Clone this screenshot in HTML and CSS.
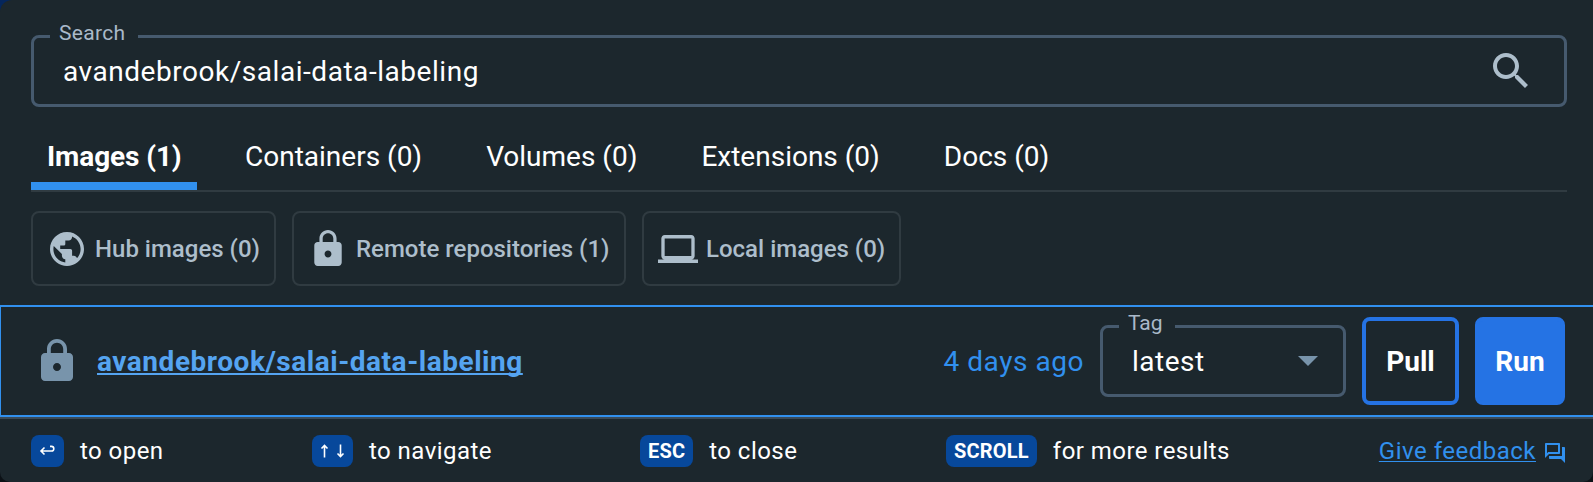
FILE: index.html
```
<!DOCTYPE html>
<html lang="en">
<head>
<meta charset="utf-8">
<title>Search</title>
<link rel="stylesheet" href="styles.css">
</head>
<body>
<main class="dialog">
  <div class="field search">
    <span class="field-label">Search</span>
    <span class="search-text">avandebrook/salai-data-labeling</span>
    <svg class="search-icon" viewBox="3 3 17.5 17.5"><path d="M15.5 14h-.79l-.28-.27C15.41 12.59 16 11.11 16 9.5 16 5.91 13.09 3 9.5 3S3 5.91 3 9.5 5.91 16 9.5 16c1.61 0 3.09-.59 4.23-1.57l.27.28v.79l5 4.99L20.49 19l-4.99-5zm-6 0C7.01 14 5 11.99 5 9.5S7.01 5 9.5 5 14 7.01 14 9.5 11.99 14 9.5 14z"/></svg>
  </div>
  <nav class="tabs">
    <a class="tab active">Images (1)</a>
    <a class="tab">Containers (0)</a>
    <a class="tab">Volumes (0)</a>
    <a class="tab">Extensions (0)</a>
    <a class="tab">Docs (0)</a>
  </nav>
  <div class="chips">
    <button class="chip hub"><svg class="globe" viewBox="2 2 20 20"><path d="M12 2C6.48 2 2 6.48 2 12s4.48 10 10 10 10-4.48 10-10S17.52 2 12 2zm-1 17.93c-3.95-.49-7-3.85-7-7.93 0-.62.08-1.21.21-1.79L9 15v1c0 1.1.9 2 2 2v1.93zm6.9-2.54c-.26-.81-1-1.39-1.9-1.39h-1v-3c0-.55-.45-1-1-1H8v-2h2c.55 0 1-.45 1-1V7h2c1.1 0 2-.9 2-2v-.41c2.93 1.19 5 4.06 5 7.41 0 2.08-.8 3.97-2.1 5.39z"/></svg>Hub images (0)</button>
    <button class="chip remote"><svg class="lock-small" viewBox="4 1 16 21"><path d="M18 8h-1V6c0-2.76-2.24-5-5-5S7 3.240 7 6v2H6c-1.100 0-2 .9-2 2v10c0 1.100.9 2 2 2h12c1.100 0 2-.9 2-2V10c0-1.100-.9-2-2-2zm-6 9c-1.100 0-2-.9-2-2s.9-2 2-2 2 .9 2 2-.9 2-2 2zm3.100-9H8.900V6c0-1.710 1.390-3.100 3.100-3.100s3.100 1.390 3.100 3.100v2z"/></svg>Remote repositories (1)</button>
    <button class="chip local"><svg class="laptop" viewBox="0 4 24 16" preserveAspectRatio="none"><path d="M20 18c1.100 0 1.990-.9 1.990-2L22 6c0-1.100-.9-2-2-2H4c-1.100 0-2 .9-2 2v10c0 1.100.9 2 2 2H0v2h24v-2h-4zM4 6h16v10H4V6z"/></svg>Local images (0)</button>
  </div>
  <section class="result">
    <svg class="lock" viewBox="4 1 16 21"><path d="M18 8h-1V6c0-2.760-2.240-5-5-5S7 3.240 7 6v2H6c-1.100 0-2 .9-2 2v10c0 1.100.9 2 2 2h12c1.100 0 2-.9 2-2V10c0-1.100-.9-2-2-2zm-6 9c-1.100 0-2-.9-2-2s.9-2 2-2 2 .9 2 2-.9 2-2 2zm3.100-9H8.900V6c0-1.710 1.390-3.100 3.100-3.100s3.100 1.390 3.100 3.100v2z"/></svg>
    <a class="repo">avandebrook/salai-data-labeling</a>
    <span class="time">4 days ago</span>
    <div class="field select">
      <span class="field-label">Tag</span>
      <span>latest</span>
      <svg class="caret" viewBox="0 0 20 10"><path d="M0 0h20L10 10z"/></svg>
    </div>
    <button class="btn pull">Pull</button>
    <button class="btn run">Run</button>
  </section>
  <footer class="footer">
    <div class="hint open"><kbd class="key"><svg class="enter" viewBox="0 0 16 12"><path d="M5 2.500 1.500 6 5 9.500M1.500 6H12a2.300 2.300 0 0 0 0-4.600h-1.500"/></svg></kbd>to open</div>
    <div class="hint navigate"><kbd class="key"><svg class="arrows" viewBox="0 0 24 14"><path d="M4 13.500V1.500M1 4.500l3-3 3 3M20 .5v12M17 9.500l3 3 3-3"/></svg></kbd>to navigate</div>
    <div class="hint close"><kbd class="key">ESC</kbd>to close</div>
    <div class="hint"><kbd class="key">SCROLL</kbd>for more results</div>
    <div class="feedback"><a class="feedback-link">Give feedback</a><svg class="forum" viewBox="2 2 20 20"><path d="M15 4v7H5.170L4 12.170V4h11m1-2H3c-.55 0-1 .45-1 1v14l4-4h10c.55 0 1-.45 1-1V3c0-.55-.45-1-1-1zm5 4h-2v9H6v2c0 .55.45 1 1 1h11l4 4V7c0-.55-.45-1-1-1z"/></svg></div>
  </footer>
</main>
</body>
</html>
```
FILE: styles.css
```
* { box-sizing: border-box; }
body {
  margin: 0;
  background: linear-gradient(#05265c 0 50%, #0c1116 50%);
  font-family: Roboto, "Liberation Sans", sans-serif;
}
.dialog {
  width: 1593px;
  height: 482px;
  padding-top: 35px;
  display: flex;
  flex-direction: column;
  overflow: hidden;
  background: #1c272d;
  border-radius: 12px 0 10px 10px;
  color: #fff;
  font-size: 28px;
}
svg { display: block; flex: none; fill: currentColor; }
button { margin: 0; font: inherit; background: none; }

.field {
  position: relative;
  display: flex;
  align-items: center;
  justify-content: space-between;
  height: 72px;
  border: 3px solid #465a6e;
  border-radius: 8px;
}
.field-label {
  position: absolute;
  top: -17px;
  left: 16px;
  padding: 0 13px 0 9px;
  background: #1c272d;
  color: #a9b9c9;
  font-size: 21px;
  line-height: 24px;
  letter-spacing: .3px;
}
.search {
  flex: none;
  margin: 0 26px 0 31px;
  padding: 0 36px 0 29px;
}
.search-text { letter-spacing: .54px; }
.search-icon { width: 35px; height: 35px; margin-bottom: 2px; color: #adbecb; }

.tabs {
  display: flex;
  flex: none;
  gap: 32px;
  height: 68px;
  margin: 17px 26px 0 31px;
  border-bottom: 2px solid #303b41;
}
.tab {
  height: 66px;
  padding: 0 16px;
  line-height: 66px;
}
.tab.active { width: 166px; padding-right: 0; font-weight: 700; letter-spacing: -.1px; box-shadow: inset 0 -8px #3190ee; }

.chips { display: flex; flex: none; gap: 16px; margin: 19px 0 0 31px; }
.chip {
  display: flex;
  align-items: center;
  height: 75px;
  padding: 0 0 0 17px;
  border: 2px solid #303b41;
  border-radius: 8px;
  color: #adbecb;
  font-size: 24px;
  font-weight: 500;
  white-space: nowrap;
}
.hub { width: 245px; }
.remote { width: 334px; padding-left: 20px; }
.local { width: 259px; padding-left: 14px; }
.globe { width: 34px; height: 34px; margin-right: 11px; }
.lock-small { width: 28px; height: 36px; margin: 0 14px 2px 0; }
.laptop { width: 40px; height: 28px; margin-right: 8px; }

.result {
  display: flex;
  flex: none;
  align-items: center;
  height: 112px;
  margin-top: 19px;
  padding: 0 28px 0 40px;
  border: solid #3190ee;
  border-width: 2px 0 2px 1px;
}
.lock { width: 32px; height: 42px; margin: 0 24px 2px 0; color: #7894ab; }
.repo {
  color: #55a4f1;
  font-weight: 700;
  letter-spacing: .54px;
  text-decoration: underline;
  text-decoration-thickness: 2px;
  text-underline-offset: 2px;
  text-decoration-skip-ink: none;
}
.time { margin-left: auto; color: #3190ee; letter-spacing: .54px; }
.select {
  width: 246px;
  margin: 0 16px 0 16px;
  padding: 0 25px 0 29px;
  letter-spacing: .5px;
}
.select .field-label { padding-right: 12px; letter-spacing: 0; }
.caret { width: 20px; height: 10px; color: #7894ab; }
.btn {
  width: 97px;
  height: 88px;
  padding: 0;
  border: 4px solid #2573e4;
  border-radius: 8px;
  color: #fff;
  font-weight: 700;
}
.run { width: 90px; margin-left: 16px; background: #2573e4; }

.footer {
  display: flex;
  flex: 1;
  align-items: center;
  padding: 1px 28px 0 31px;
  border-top: 2px solid #3a4a58;
  font-size: 24px;
  letter-spacing: .45px;
}
.hint { display: flex; align-items: center; gap: 16px; white-space: nowrap; }
.open { width: 281px; }
.navigate { width: 328px; }
.close { width: 306px; }
.key {
  display: flex;
  align-items: center;
  height: 32px;
  padding: 0 8px;
  border-radius: 8px;
  background: #07489b;
  font: 700 20px Roboto, "Liberation Sans", sans-serif;
  letter-spacing: .2px;
}
.enter, .arrows { fill: none; stroke: #fff; stroke-width: 1.6; }
.enter { width: 17px; height: 12px; }
.arrows { width: 25px; height: 14px; }
.feedback { display: flex; align-items: center; gap: 9px; margin-left: auto; color: #3190ee; white-space: nowrap; }
.feedback-link {
  letter-spacing: .5px;
  text-decoration: underline;
  text-decoration-thickness: 1px;
  text-underline-offset: 2px;
  text-decoration-skip-ink: none;
}
.forum { width: 20px; height: 20px; margin-top: 4px; }
```
